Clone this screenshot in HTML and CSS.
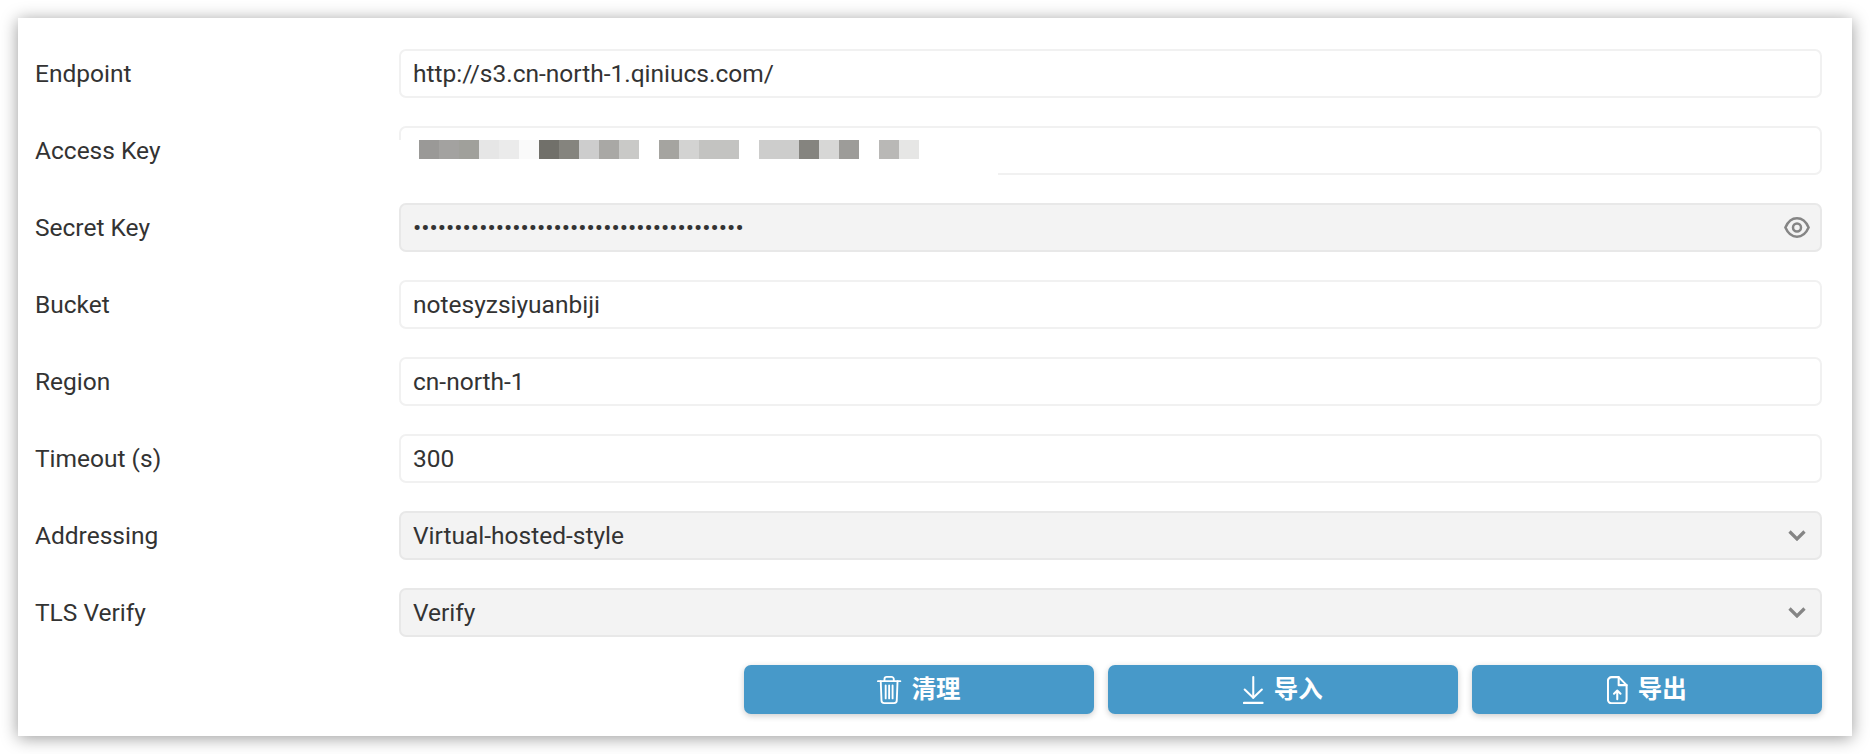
FILE: index.html
```html
<!DOCTYPE html>
<html lang="en">
<head>
<meta charset="UTF-8">
<title>S3 Settings</title>
<link rel="stylesheet" href="styles.css">
</head>
<body>

<form class="card">
    <div class="row">
        <label for="endpoint">Endpoint</label>
        <input id="endpoint" type="text" value="http://s3.cn-north-1.qiniucs.com/">
    </div>
    <div class="row">
        <label for="accessKey">Access Key</label>
        <div class="field">
            <input id="accessKey" type="text">
            <div class="mask"><div class="mosaic"></div></div>
        </div>
    </div>
    <div class="row">
        <label for="secretKey">Secret Key</label>
        <div class="field">
            <input id="secretKey" class="filled" type="password" value="5555555555555555555555555555555555555555">
            <svg class="eye" viewBox="0 0 26 21" fill="none" stroke="currentColor" stroke-width="2.500">
                <path d="M1.400 10.500C4 4.500 8 1.300 13 1.300s9 3.200 11.600 9.200C22 16.500 18 19.700 13 19.700S4 16.500 1.400 10.500z"/>
                <circle cx="13" cy="10.500" r="4"/>
            </svg>
        </div>
    </div>
    <div class="row">
        <label for="bucket">Bucket</label>
        <input id="bucket" type="text" value="notesyzsiyuanbiji">
    </div>
    <div class="row">
        <label for="region">Region</label>
        <input id="region" type="text" value="cn-north-1">
    </div>
    <div class="row">
        <label for="timeout">Timeout (s)</label>
        <input id="timeout" type="text" value="300">
    </div>
    <div class="row">
        <label for="addressing">Addressing</label>
        <select id="addressing" class="filled">
            <option>Virtual-hosted-style</option>
        </select>
    </div>
    <div class="row">
        <label for="tlsVerify">TLS Verify</label>
        <select id="tlsVerify" class="filled">
            <option>Verify</option>
        </select>
    </div>

    <div class="actions">
        <button type="button">
            <svg class="icon" viewBox="0 0 26 30" fill="none" stroke="currentColor" stroke-width="2" stroke-linecap="round" stroke-linejoin="round">
                <path d="M1 5.500h24"/>
                <path d="M8 5.500V3.500A2.500 2.500 0 0 1 10.500 1h5A2.500 2.500 0 0 1 18 3.500v2"/>
                <path d="M4 5.500l.8 20.500a3 3 0 0 0 3 3h10.400a3 3 0 0 0 3-3l.8-20.500"/>
                <path d="M9.300 10v14M13 10v14M16.700 10v14"/>
            </svg>
            <span class="btn-text">清理</span>
        </button>
        <button type="button">
            <svg class="icon" viewBox="0 0 22 30" fill="none" stroke="currentColor" stroke-width="2.200" stroke-linecap="round" stroke-linejoin="round">
                <path d="M11 1.200v22"/>
                <path d="M1.800 14.500l9.200 8.700 9.200-8.700"/>
                <path d="M1 28.800h20"/>
            </svg>
            <span class="btn-text">导入</span>
        </button>
        <button type="button">
            <svg class="icon" viewBox="0 0 22 30" fill="none" stroke="currentColor" stroke-width="2.200" stroke-linecap="round" stroke-linejoin="round">
                <path d="M12.500 1.200H5a4 4 0 0 0-4 4v20a4 4 0 0 0 4 4h12a4 4 0 0 0 4-4V9.800z"/>
                <path d="M12.500 1.200V9.800H21"/>
                <path d="M11 25v-9.500M7.500 19l3.500-3.500 3.500 3.500"/>
            </svg>
            <span class="btn-text">导出</span>
        </button>
    </div>
</form>

</body>
</html>
```

FILE: styles.css
```css
html, body {
    height: 100%;
}

body {
    margin: 0;
    padding: 18px;
    box-sizing: border-box;
    overflow: hidden;
    background-color: #fff;
    font-family: Roboto, "Noto Sans CJK SC", sans-serif;
    font-size: 24.5px;
    color: #333;
}

.card {
    display: flex;
    flex-direction: column;
    gap: 28px;
    height: 718px;
    box-sizing: border-box;
    padding: 31px 30px 22px 17px;
    background-color: #fff;
    box-shadow: 0 2px 16px rgba(0, 0, 0, 0.4);
}

.row {
    display: grid;
    grid-template-columns: 364px 1fr;
    align-items: center;
    height: 49px;
}

.field {
    position: relative;
}

input, select {
    display: block;
    width: 100%;
    height: 49px;
    box-sizing: border-box;
    padding: 0 12px;
    border: 2px solid #f1f1f1;
    border-radius: 7px;
    outline: none;
    background-color: #fff;
    font-family: inherit;
    font-size: 24.5px;
    color: #333;
}

select {
    appearance: none;
    background-image: url("data:image/svg+xml,%3Csvg xmlns='http://www.w3.org/2000/svg' viewBox='0 0 18 11'%3E%3Cpath d='M1.500 1.500L9 9l7.500-7.500' fill='none' stroke='%23858585' stroke-width='3.200'/%3E%3C/svg%3E");
    background-repeat: no-repeat;
    background-position: right 14px center;
    background-size: 18px 11px;
}

.filled {
    border-color: #e8e8e8;
    background-color: #f3f3f3;
}

.mask {
    position: absolute;
    top: 14px;
    left: 0;
    width: 599px;
    height: 36px;
    background-color: #fff;
}

.mosaic {
    width: 500px;
    height: 19px;
    margin-left: 20px;
    background-image: linear-gradient(to right,
        #9a9997 0 20px, #a3a2a0 0 40px, #a0a09b 0 60px, #e6e6e6 0 80px, #ebebeb 0 100px,
        #fafafa 0 120px, #71706a 0 140px, #85847e 0 160px, #cdcdcd 0 180px, #a9a8a5 0 200px,
        #c9c9c7 0 220px, #fff 0 240px, #a5a4a0 0 260px, #d3d3d2 0 280px, #c3c3c1 0 320px,
        #fff 0 340px, #cdcdcc 0 380px, #85847f 0 400px, #d7d7d6 0 420px, #9d9c99 0 440px,
        #fff 0 460px, #b9b8b6 0 480px, #e6e6e5 0 500px);
}

.eye {
    position: absolute;
    top: 14px;
    right: 12px;
    width: 26px;
    height: 21px;
    color: #858585;
}

.actions {
    display: flex;
    justify-content: flex-end;
    gap: 14px;
}

button {
    display: flex;
    align-items: center;
    justify-content: center;
    gap: 10px;
    flex: 0 0 350px;
    height: 49px;
    padding: 0;
    border: none;
    border-radius: 7px;
    background-color: #4799c9;
    box-shadow: 0 2px 6px rgba(0, 0, 0, 0.2);
    font-family: inherit;
    font-size: 24.5px;
    font-weight: 700;
    color: #fff;
    cursor: pointer;
}

.btn-text {
    margin-bottom: 4px;
}

.icon {
    height: 28px;
    width: auto;
}
```
